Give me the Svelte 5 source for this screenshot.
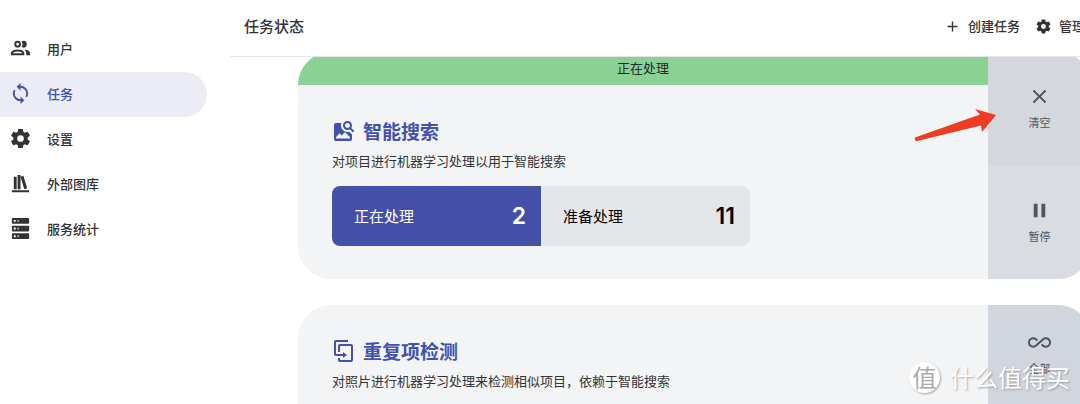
<script>
  const icons = {
    users: 'M13.07 10.41A5 5 0 0 0 13.07 4.59A3.39 3.39 0 0 1 15 4A3.5 3.5 0 0 1 15 11A3.39 3.39 0 0 1 13.07 10.41M5.5 7.5A3.5 3.5 0 1 1 9 11A3.5 3.5 0 0 1 5.5 7.5M7.5 7.5A1.5 1.5 0 1 0 9 6A1.5 1.5 0 0 0 7.5 7.5M16 17V19H2V17S2 13 9 13 16 17 16 17M14 17C13.86 16.22 12.67 15 9 15S4.07 16.31 4 17M15.95 13A5.32 5.32 0 0 1 18 17V19H22V17S22 13.37 15.94 13Z',
    sync: 'M12,18A6,6 0 0,1 6,12C6,11 6.25,10.03 6.7,9.2L5.24,7.74C4.46,8.97 4,10.43 4,12A8,8 0 0,0 12,20V23L16,19L12,15M12,4V1L8,5L12,9V6A6,6 0 0,1 18,12C18,13 17.75,13.97 17.3,14.8L18.76,16.26C19.54,15.03 20,13.57 20,12A8,8 0 0,0 12,4Z',
    cog: 'M12,15.5A3.5,3.5 0 0,1 8.5,12A3.5,3.5 0 0,1 12,8.5A3.5,3.5 0 0,1 15.5,12A3.5,3.5 0 0,1 12,15.5M19.43,12.97C19.47,12.65 19.5,12.33 19.5,12C19.5,11.67 19.47,11.34 19.43,11L21.54,9.37C21.73,9.22 21.78,8.95 21.66,8.73L19.66,5.27C19.54,5.05 19.27,4.96 19.05,5.05L16.56,6.05C16.04,5.66 15.5,5.32 14.87,5.07L14.5,2.42C14.46,2.18 14.25,2 14,2H10C9.75,2 9.54,2.18 9.5,2.42L9.13,5.07C8.5,5.32 7.96,5.66 7.44,6.05L4.95,5.05C4.73,4.96 4.46,5.05 4.34,5.27L2.34,8.73C2.21,8.95 2.27,9.22 2.46,9.37L4.57,11C4.53,11.34 4.5,11.67 4.5,12C4.5,12.33 4.53,12.65 4.57,12.97L2.46,14.63C2.27,14.78 2.21,15.05 2.34,15.27L4.34,18.73C4.46,18.95 4.73,19.03 4.95,18.95L7.44,17.94C7.96,18.34 8.5,18.68 9.13,18.93L9.5,21.58C9.54,21.82 9.75,22 10,22H14C14.25,22 14.46,21.82 14.5,21.58L14.87,18.93C15.5,18.67 16.04,18.34 16.56,17.94L19.05,18.95C19.27,19.03 19.54,18.95 19.66,18.73L21.66,15.27C21.78,15.05 21.73,14.78 21.54,14.63L19.43,12.97Z',
    library: 'M9 3V18H12V3H9M12 5L16 18L19 17L15 4L12 5M5 5V18H8V5H5M3 19V21H21V19H3Z',
    server: 'M4,1H20A1,1 0 0,1 21,2V6A1,1 0 0,1 20,7H4A1,1 0 0,1 3,6V2A1,1 0 0,1 4,1M4,9H20A1,1 0 0,1 21,10V14A1,1 0 0,1 20,15H4A1,1 0 0,1 3,14V10A1,1 0 0,1 4,9M4,17H20A1,1 0 0,1 21,18V22A1,1 0 0,1 20,23H4A1,1 0 0,1 3,22V18A1,1 0 0,1 4,17M9,5H10V3H9V5M9,13H10V11H9V13M9,21H10V19H9V21M5,3V5H7V3H5M5,11V13H7V11H5M5,19V21H7V19H5Z',
    plus: 'M19,13H13V19H11V13H5V11H11V5H13V11H19V13Z',
    close: 'M19,6.41L17.59,5L12,10.59L6.41,5L5,6.41L10.59,12L5,17.59L6.41,19L12,13.41L17.59,19L19,17.59L13.41,12L19,6.41Z',
    pause: 'M14,19H18V5H14M6,19H10V5H6V19Z',
    all: 'M18.6,6.62C17.16,6.62 15.8,7.18 14.83,8.15L7.8,14.39C7.16,15.03 6.31,15.38 5.4,15.38C3.53,15.38 2,13.87 2,12C2,10.13 3.53,8.62 5.4,8.62C6.31,8.62 7.16,8.97 7.84,9.65L8.97,10.65L10.5,9.31L9.22,8.2C8.2,7.18 6.84,6.62 5.4,6.62C2.42,6.62 0,9.04 0,12C0,14.96 2.42,17.38 5.4,17.38C6.84,17.38 8.2,16.82 9.17,15.85L16.2,9.61C16.84,8.97 17.69,8.62 18.6,8.62C20.47,8.62 22,10.13 22,12C22,13.87 20.47,15.38 18.6,15.38C17.7,15.38 16.84,15.03 16.16,14.35L15,13.34L13.5,14.68L14.78,15.8C15.8,16.81 17.15,17.37 18.6,17.37C21.58,17.37 24,14.96 24,12C24,9 21.58,6.62 18.6,6.62Z',
    imageSearch: 'M15.5,9C16.2,9 16.79,8.76 17.27,8.27C17.76,7.79 18,7.2 18,6.5C18,5.83 17.76,5.23 17.27,4.73C16.79,4.23 16.2,4 15.5,4C14.83,4 14.23,4.23 13.73,4.73C13.23,5.23 13,5.83 13,6.5C13,7.2 13.23,7.79 13.73,8.27C14.23,8.76 14.83,9 15.5,9M19.31,8.91L22.41,12L21,13.41L17.86,10.31C17.08,10.78 16.28,11 15.47,11C14.22,11 13.16,10.58 12.3,9.7C11.45,8.83 11,7.77 11,6.5C11,5.27 11.45,4.2 12.33,3.33C13.2,2.45 14.27,2 15.5,2C16.77,2 17.83,2.45 18.7,3.33C19.58,4.2 20,5.27 20,6.5C20,7.33 19.78,8.13 19.31,8.91M18,19.5H4V18.2L7.5,14.2L9.7,16.6L13,13.2L18,18M17.3,12.8L20,15.5V20C20,20.55 19.81,21 19.41,21.4C19,21.79 18.53,22 18,22H4C3.45,22 3,21.79 2.6,21.4C2.21,21 2,20.55 2,20V6C2,5.47 2.21,5 2.6,4.59C3,4.19 3.45,4 4,4H9.5C9.2,4.8 9,5.6 9,6.5C9,8.4 9.7,9.9 10.9,11.1C12.2,12.4 13.7,13 15.5,13C16.1,13 16.7,12.9 17.3,12.8Z',
    duplicate: 'M11,17H4A2,2 0 0,1 2,15V3A2,2 0 0,1 4,1H16V3H4V15H11V13L15,16L11,19V17M19,21V7H8V13H6V7A2,2 0 0,1 8,5H19A2,2 0 0,1 21,7V21A2,2 0 0,1 19,23H8A2,2 0 0,1 6,21V19H8V21H19Z',
  };

  const nav = [
    { label: '用户', icon: 'users' },
    { label: '任务', icon: 'sync', active: true },
    { label: '设置', icon: 'cog' },
    { label: '外部图库', icon: 'library' },
    { label: '服务统计', icon: 'server' },
  ];

  const jobs = [
    {
      title: '智能搜索',
      icon: 'imageSearch',
      text: '对项目进行机器学习处理以用于智能搜索',
      status: '正在处理',
      counts: [
        { label: '正在处理', value: 2, primary: true },
        { label: '准备处理', value: 11 },
      ],
      actions: [
        { label: '清空', icon: 'close', tone: 'mid' },
        { label: '暂停', icon: 'pause', tone: 'light' },
      ],
    },
    {
      title: '重复项检测',
      icon: 'duplicate',
      text: '对照片进行机器学习处理来检测相似项目，依赖于智能搜索',
      counts: [],
      actions: [{ label: '全部', icon: 'all', tone: 'dark' }],
    },
  ];
</script>

{#snippet icon(name)}
  <svg class="icon" viewBox="0 0 24 24" aria-hidden="true"><path fill-rule="evenodd" d={icons[name]} /></svg>
{/snippet}

<div class="app">
  <nav class="sidebar">
    {#each nav as item}
      <a href="#top" class:active={item.active}>{@render icon(item.icon)}<span>{item.label}</span></a>
    {/each}
  </nav>

  <main>
    <header>
      <h1>任务状态</h1>
      <div class="tools">
        <button>{@render icon('plus')}<span>创建任务</span></button>
        <button>{@render icon('cog')}<span>管理</span></button>
      </div>
    </header>

    <div class="scroller">
      <div class="jobs">
        {#each jobs as job}
          <section class="card">
            <div class="body">
              {#if job.status}<div class="status">{job.status}</div>{/if}
              <div class="content">
                <h2>{@render icon(job.icon)}<span>{job.title}</span></h2>
                <p>{job.text}</p>
                <div class="counts">
                  {#each job.counts as count}
                    <div class="count" class:primary={count.primary}>
                      <span>{count.label}</span><strong>{count.value}</strong>
                    </div>
                  {/each}
                </div>
              </div>
            </div>
            <div class="actions">
              {#each job.actions as action}
                <button class={action.tone}>{@render icon(action.icon)}<span>{action.label}</span></button>
              {/each}
            </div>
          </section>
        {/each}
      </div>
    </div>
  </main>

  <svg class="arrow" viewBox="0 0 82 34" aria-hidden="true">
    <path d="M1 29.5 66 6.5 61 1 82 7 68 24 67 17.5 3 33Q0 33 1 29.5Z" />
  </svg>
  <div class="watermark"><span class="seal">值</span><span>什么值得买</span></div>
</div>

<style>
  :global(body) {
    margin: 0;
    background: #fff;
  }
  .app {
    position: relative;
    display: grid;
    grid-template-columns: 230px minmax(0, 1fr);
    height: 100vh;
    overflow: hidden;
    color: #333;
    font: 500 13px/20px "Noto Sans CJK SC", sans-serif;
  }
  button {
    border: 0;
    padding: 0;
    background: none;
    color: inherit;
    font: inherit;
    cursor: pointer;
  }
  .icon {
    flex: none;
    width: 23px;
    height: 23px;
    fill: currentColor;
  }
  .sidebar {
    padding: 27px 23px 0 0;
  }
  .sidebar a {
    box-sizing: border-box;
    display: flex;
    align-items: center;
    gap: 15px;
    height: 45px;
    padding: 0 0 2px 9px;
    border-radius: 0 24px 24px 0;
    color: inherit;
    text-decoration: none;
  }
  .sidebar a.active {
    background: #ececf6;
    color: #4250af;
  }
  main {
    display: flex;
    flex-direction: column;
    min-height: 0;
  }
  header {
    box-sizing: border-box;
    display: flex;
    flex: none;
    align-items: center;
    justify-content: space-between;
    height: 57px;
    padding: 0 0 4px 14px;
    border-bottom: 1px solid #e5e6e8;
  }
  h1 {
    margin: 0;
    font-size: 15px;
    font-weight: 500;
    line-height: 20px;
  }
  .tools {
    display: flex;
    gap: 15px;
    margin-right: -5px;
  }
  .tools button {
    display: flex;
    align-items: center;
    gap: 7px;
    white-space: nowrap;
  }
  .tools .icon {
    width: 17px;
    height: 17px;
  }
  .scroller {
    flex: 1;
    min-height: 0;
    overflow: hidden;
  }
  .jobs {
    display: grid;
    gap: 26px;
    margin: -5px -11px 0 68px;
  }
  .card {
    display: flex;
    min-height: 200px;
    border-radius: 33px;
    background: #f3f4f6;
    overflow: hidden;
  }
  .body {
    flex: 1;
    min-width: 0;
  }
  .status {
    height: 33px;
    background: #8bd194;
    color: #1b2a33;
    font-weight: 400;
    line-height: 31px;
    text-align: center;
  }
  .content {
    padding: 33px 34px;
  }
  h2 {
    display: flex;
    align-items: center;
    gap: 7px;
    margin: 0;
    color: #4250af;
    font-size: 19px;
    font-weight: 700;
    line-height: 26px;
  }
  h2 .icon {
    width: 24px;
    height: 24px;
  }
  p {
    margin: 7px 0 15px;
    font-weight: 400;
  }
  .counts {
    display: flex;
    max-width: 418px;
    border-radius: 8px;
    overflow: hidden;
  }
  .count {
    display: flex;
    flex: 1;
    align-items: center;
    justify-content: space-between;
    height: 60px;
    padding: 0 15px 0 22px;
    background: #e5e6ea;
    color: #000;
    font-size: 15px;
    font-weight: 400;
    line-height: 20px;
  }
  .count.primary {
    background: #4450a8;
    color: #fff;
  }
  .count strong {
    font: 600 23px/32px Inter, sans-serif;
  }
  .actions {
    display: flex;
    flex: none;
    flex-direction: column;
    width: 103px;
    color: #4b5563;
    font-size: 11px;
    font-weight: 400;
  }
  .actions button {
    display: flex;
    flex: 1;
    flex-direction: column;
    align-items: center;
    justify-content: center;
    gap: 4px;
  }
  .actions .mid {
    background: #d4d7dc;
  }
  .actions .light {
    background: #d9dce1;
  }
  .actions .dark {
    justify-content: flex-start;
    padding-top: 26px;
    background: #d1d5dd;
  }
  .arrow {
    position: absolute;
    top: 108px;
    left: 914px;
    width: 82px;
    height: 34px;
    fill: #ee3c23;
  }
  .watermark {
    position: absolute;
    right: 10px;
    bottom: 9px;
    display: flex;
    align-items: center;
    gap: 10px;
    color: #fff;
    font-size: 24px;
    font-weight: 400;
    line-height: 36px;
    text-shadow: 1px 1px 2px #6668;
  }
  .seal {
    width: 31px;
    height: 31px;
    border-radius: 50%;
    background: #fff;
    box-shadow: 1px 1px 2px #6668;
    color: #aaa;
    line-height: 30px;
    text-align: center;
    text-shadow: none;
  }
</style>
